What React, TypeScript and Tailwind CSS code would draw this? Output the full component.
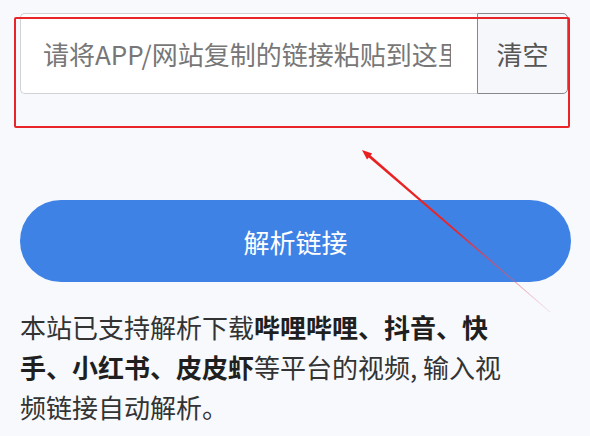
import React, { useState } from 'react';

export default function App() {
  const [url, setUrl] = useState('');

  return (
    <div
      className="relative min-h-screen w-full overflow-hidden bg-[#f7f9fc] pt-[13px] pl-[20px]"
      style={{ fontFamily: '"Noto Sans CJK SC", "Noto Sans", sans-serif' }}
    >
      <div className="flex h-[81px] w-[548px]">
        <input
          value={url}
          onChange={e => setUrl(e.target.value)}
          placeholder="请将APP/网站复制的链接粘贴到这里"
          className="h-full min-w-0 flex-1 rounded-l-[5px] border border-r-0 border-[#d0d2d5] bg-white pl-[22px] pr-[26px] text-[26px] text-[#333] placeholder-[#777] outline-none"
        />
        <button
          type="button"
          onClick={() => setUrl('')}
          className="h-full w-[91px] rounded-r-[5px] border-[1.5px] border-[#85888c] bg-[#f5f7fa] text-[26px] text-[#555]"
        >
          清空
        </button>
      </div>

      <button
        type="button"
        className="mt-[106px] flex h-[82px] w-[551px] items-center justify-center rounded-full bg-[#3e82e6] text-[26px] text-white"
      >
        解析链接
      </button>

      <p className="mt-[25px] w-[490px] text-[26px] leading-[40px] text-[#333]">
        本站已支持解析下载<b className="font-bold text-[#1f1f1f]">哔哩哔哩、抖音、快手、小红书、皮皮虾</b>等平台的视频, 输入视频链接自动解析。
      </p>

      {/* annotation box */}
      <div className="pointer-events-none absolute left-[14px] top-[17px] h-[111px] w-[556px] rounded-[2px] border-2 border-[#e8262a]" />

      {/* annotation arrow */}
      <svg className="pointer-events-none absolute inset-0" width="590" height="436" viewBox="0 0 590 436">
        <defs>
          <linearGradient id="arrowFade" gradientUnits="userSpaceOnUse" x1="362" y1="150" x2="550" y2="312">
            <stop offset="0" stopColor="#ea1f1f" />
            <stop offset="0.5" stopColor="#e8262a" />
            <stop offset="1" stopColor="#e07a95" stopOpacity="0.25" />
          </linearGradient>
        </defs>
        <polygon points="367,156.1 369,153.9 550.2,311.8 549.8,312.2" fill="url(#arrowFade)" />
        <polygon points="362,150 372.2,153.5 367,159.5" fill="#ea1f1f" />
      </svg>
    </div>
  );
}
